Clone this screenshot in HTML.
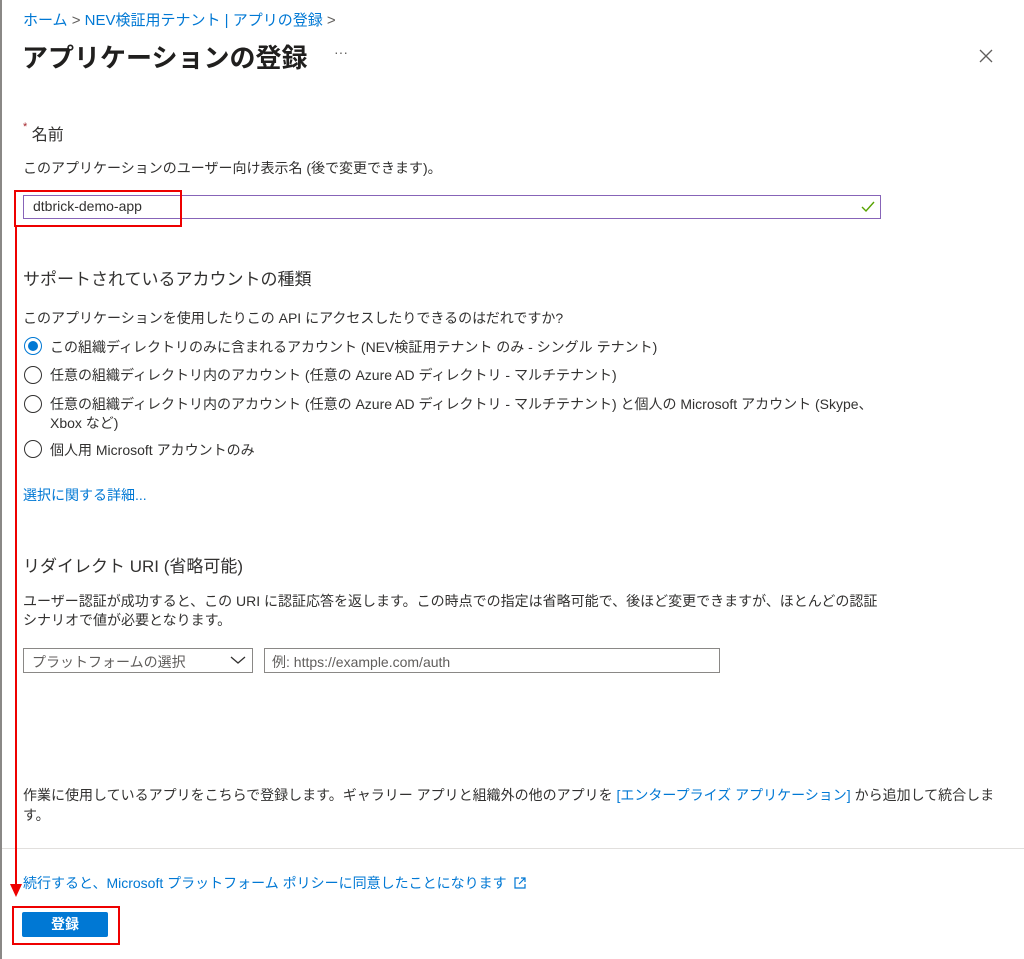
<!DOCTYPE html>
<html><head><meta charset="utf-8"><style>
body{margin:0;width:1024px;height:959px;background:#fff;position:relative;overflow:hidden;font-family:"Liberation Sans","Noto Sans CJK JP",sans-serif;color:#323130;font-size:14px}
.a{position:absolute;white-space:nowrap}
.link{color:#0078d4}
.radio{position:absolute;width:18px;height:18px;border:1px solid #323130;border-radius:50%;box-sizing:border-box;left:24px}
.sel::after{content:"";position:absolute;left:3px;top:3px;width:10px;height:10px;border-radius:50%;background:#0078d4}
.sel{border-color:#0078d4}
</style></head><body>
<div class="a" style="left:0;top:0;width:2px;height:959px;background:#8a8886"></div>
<div class="a link" style="left:23px;top:9px;font-size:15px">ホーム <span style="color:#605e5c">&gt;</span> NEV検証用テナント | アプリの登録 <span style="color:#605e5c">&gt;</span></div>
<div class="a" style="left:22px;top:38px;font-size:26px;font-weight:bold;color:#201f1e">アプリケーションの登録</div>
<div class="a" style="left:334px;top:44px;font-size:14px;color:#605e5c">···</div>
<svg class="a" style="left:979px;top:49px" width="14" height="14"><path d="M1 1L13 13M13 1L1 13" stroke="#605e5c" stroke-width="1.3"/></svg>
<div class="a" style="left:23px;top:121px;font-size:16px"><span style="color:#a4262c;font-size:11px;vertical-align:top">*</span> 名前</div>
<div class="a" style="left:23px;top:158px">このアプリケーションのユーザー向け表示名 (後で変更できます)。</div>
<div class="a" style="left:23px;top:195px;width:858px;height:24px;border:1px solid #8764b8;box-sizing:border-box"></div>
<div class="a" style="left:33px;top:198px">dtbrick-demo-app</div>
<svg class="a" style="left:861px;top:201px" width="14" height="12"><path d="M1 6L5 10L13 1" fill="none" stroke="#57a300" stroke-width="1.4"/></svg>
<div class="a" style="left:23px;top:265px;font-size:17px">サポートされているアカウントの種類</div>
<div class="a" style="left:23px;top:308px">このアプリケーションを使用したりこの API にアクセスしたりできるのはだれですか?</div>
<div class="radio sel" style="top:337px"></div>
<div class="a" style="left:50px;top:337px">この組織ディレクトリのみに含まれるアカウント (NEV検証用テナント のみ - シングル テナント)</div>
<div class="radio" style="top:366px"></div>
<div class="a" style="left:50px;top:365px">任意の組織ディレクトリ内のアカウント (任意の Azure AD ディレクトリ - マルチテナント)</div>
<div class="radio" style="top:395px"></div>
<div class="a" style="left:50px;top:394px">任意の組織ディレクトリ内のアカウント (任意の Azure AD ディレクトリ - マルチテナント) と個人の Microsoft アカウント (Skype、</div>
<div class="a" style="left:50px;top:413px">Xbox など)</div>
<div class="radio" style="top:440px"></div>
<div class="a" style="left:50px;top:440px">個人用 Microsoft アカウントのみ</div>
<div class="a link" style="left:23px;top:485px">選択に関する詳細...</div>
<div class="a" style="left:23px;top:552px;font-size:17px">リダイレクト URI (省略可能)</div>
<div class="a" style="left:23px;top:591px">ユーザー認証が成功すると、この URI に認証応答を返します。この時点での指定は省略可能で、後ほど変更できますが、ほとんどの認証</div>
<div class="a" style="left:23px;top:610px">シナリオで値が必要となります。</div>
<div class="a" style="left:23px;top:648px;width:230px;height:25px;border:1px solid #8a8886;box-sizing:border-box"></div>
<div class="a" style="left:32px;top:652px;color:#605e5c">プラットフォームの選択</div>
<svg class="a" style="left:230px;top:655px" width="16" height="10"><path d="M1 2 L8 8 L15 2" fill="none" stroke="#323130" stroke-width="1.3"/></svg>
<div class="a" style="left:264px;top:648px;width:456px;height:25px;border:1px solid #8a8886;box-sizing:border-box"></div>
<div class="a" style="left:272px;top:652px;color:#605e5c">例: https://example.com/auth</div>
<div class="a" style="left:23px;top:785px">作業に使用しているアプリをこちらで登録します。ギャラリー アプリと組織外の他のアプリを <span class="link">[エンタープライズ アプリケーション]</span> から追加して統合しま</div>
<div class="a" style="left:23px;top:805px">す。</div>
<div class="a" style="left:2px;top:848px;width:1022px;height:1px;background:#e1dfdd"></div>
<div class="a link" style="left:23px;top:873px">続行すると、Microsoft プラットフォーム ポリシーに同意したことになります</div>
<svg class="a" style="left:513px;top:876px" width="14" height="14"><path d="M6 2H2V12H12V8M8 2H12V6M12 2L6 8" fill="none" stroke="#0078d4" stroke-width="1.2"/></svg>
<div class="a" style="left:22px;top:912px;width:86px;height:25px;background:#0078d4;border-radius:2px;color:#fff;font-weight:bold;text-align:center;line-height:25px">登録</div>
<div class="a" style="left:14px;top:190px;width:168px;height:37px;border:2px solid #e00;box-sizing:border-box"></div>
<div class="a" style="left:15px;top:227px;width:2px;height:660px;background:#e00"></div>
<svg class="a" style="left:10px;top:884px" width="12" height="14"><path d="M0 0 L12 0 L6 13 Z" fill="#e00"/></svg>
<div class="a" style="left:12px;top:906px;width:108px;height:39px;border:2px solid #e00;box-sizing:border-box"></div>
</body></html>
